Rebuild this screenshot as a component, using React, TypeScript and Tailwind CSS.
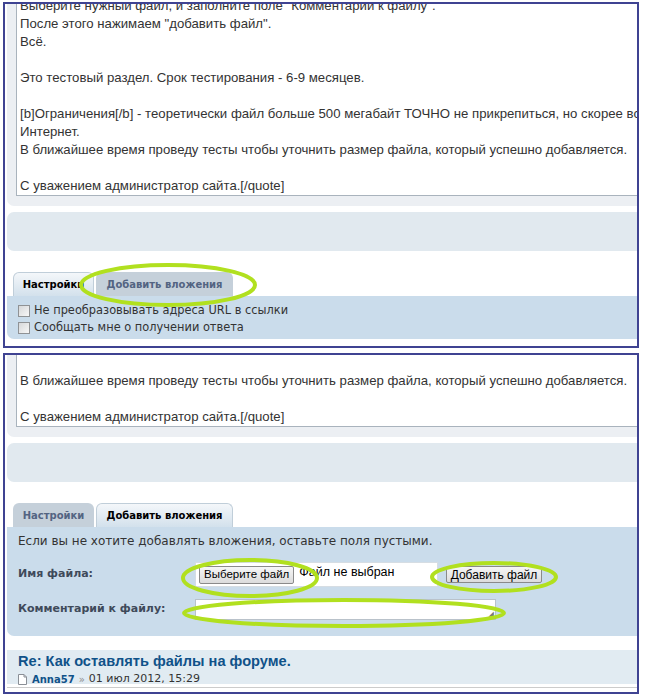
import React from "react";

const lines1 = [
  'Выберите нужный файл, и заполните поле "Комментарии к файлу".',
  'После этого нажимаем "добавить файл".',
  "Всё.",
  "",
  "Это тестовый раздел. Срок тестирования - 6-9 месяцев.",
  "",
  "[b]Ограничения[/b] - теоретически файл больше 500 мегабайт ТОЧНО не прикрепиться, но скорее всего не загрузится",
  "Интернет.",
  "В ближайшее время проведу тесты чтобы уточнить размер файла, который успешно добавляется.",
  "",
  "С уважением администратор сайта.[/quote]",
];

const lines2 = [
  "В ближайшее время проведу тесты чтобы уточнить размер файла, который успешно добавляется.",
  "",
  "С уважением администратор сайта.[/quote]",
];

const taFont = { fontFamily: '"Liberation Sans", Arial, sans-serif' };

function TextBlock({ lines, top }: { lines: string[]; top: "p1" | "p2" }) {
  return (
    <div className="w-[720px] ml-[2px] bg-[#eceff3] rounded-bl-[7px] pl-[9px] pb-[10px]">
      <div
        className={
          "bg-white border-l border-b border-[#a9b3bd] pl-[3px] text-[13.2px] leading-[18px] text-[#333] whitespace-nowrap " +
          (top === "p1" ? "-mt-[7px]" : "pt-[17px]")
        }
        style={taFont}
      >
        {lines.map((l, i) => (
          <div key={i} className="h-[18px]">
            {l}
          </div>
        ))}
      </div>
    </div>
  );
}

function Bar() {
  return <div className="w-[720px] ml-[2px] mt-[6px] h-[39px] bg-[#e1e9ef] rounded-[7px]" />;
}

function Tabs({ active }: { active: 0 | 1 }) {
  const on =
    "bg-gradient-to-b from-[#f4f7fa] to-[#d3e1ec] text-[#000] border border-b-0 border-[#c0ced9]";
  const off = "bg-[#c5d0da] text-[#536482]";
  const base =
    "h-[24px] rounded-t-[6px] flex items-center justify-center text-[10px] font-bold";
  return (
    <div
      className="flex items-end gap-[2px] ml-[8px] mt-[21px]"
      style={{ fontFamily: '"DejaVu Sans", Verdana, sans-serif' }}
    >
      <div className={base + " w-[81px] " + (active === 0 ? on : off)}>Настройки</div>
      <div className={base + " w-[137px] " + (active === 1 ? on : off)}>Добавить вложения</div>
    </div>
  );
}

function Cb() {
  return (
    <span className="inline-block w-[12px] h-[12px] border border-[#8f9295] bg-gradient-to-br from-[#d6d8da] to-[#f7f7f7] mr-[4px] shrink-0" />
  );
}

function Panel({ children, className }: { children: React.ReactNode; className?: string }) {
  return (
    <div className={"w-[636px] border-2 border-[#3f4392] overflow-hidden bg-white " + (className || "")}>
      {children}
    </div>
  );
}

export default function App() {
  const verdana = { fontFamily: '"DejaVu Sans", Verdana, sans-serif' };
  const arial = { fontFamily: '"Liberation Sans", Arial, sans-serif' };
  return (
    <div className="relative w-[646px] h-[699px] bg-white overflow-hidden">
      <div className="pt-[2px] pl-[3px]">
        <Panel className="h-[346px]">
          <TextBlock lines={lines1} top="p1" />
          <Bar />
          <Tabs active={0} />
          <div
            className="w-[720px] ml-[2px] h-[43px] bg-[#cadceb] rounded-bl-[7px] pl-[11px] pt-[7px] text-[11.4px] text-[#333]"
            style={verdana}
          >
            <div className="flex items-center h-[16px]">
              <Cb />
              <span>Не преобразовывать адреса URL в ссылки</span>
            </div>
            <div className="flex items-center h-[17px]">
              <Cb />
              <span>Сообщать мне о получении ответа</span>
            </div>
          </div>
        </Panel>

        <Panel className="h-[341px] mt-[5px]">
          <TextBlock lines={lines2} top="p2" />
          <Bar />
          <Tabs active={1} />
          <div
            className="w-[720px] ml-[2px] h-[109px] bg-[#cadceb] rounded-bl-[7px] pl-[11px] pt-[5px] text-[#333]"
            style={verdana}
          >
            <div className="text-[12px] h-[18px] leading-[18px]">
              Если вы не хотите добавлять вложения, оставьте поля пустыми.
            </div>
            <div className="flex items-center mt-[12px] h-[25px]">
              <div className="w-[177px] text-[11px] font-bold text-[#3f4a5a]">Имя файла:</div>
              <div className="w-[243px] h-[25px] bg-white border border-[#d6dde3] flex items-center pl-[3px]">
                <span
                  className="h-[18px] px-[4px] flex items-center text-[11.5px] text-black bg-gradient-to-b from-[#f6f6f6] to-[#dcdcdc] border border-[#8a8a8a] rounded-[2px]"
                  style={arial}
                >
                  Выберите файл
                </span>
                <span className="ml-[5px] text-[12.5px] text-black -mt-[4px]" style={arial}>
                  Файл не выбран
                </span>
              </div>
              <span
                className="ml-[8px] h-[17px] w-[96px] flex items-center justify-center text-[12px] text-black bg-gradient-to-b from-[#f6f6f6] to-[#dcdcdc] border border-[#8a8a8a] rounded-[2px]"
                style={arial}
              >
                Добавить файл
              </span>
            </div>
            <div className="flex items-center mt-[11px] h-[22px]">
              <div className="w-[177px] text-[11px] font-bold text-[#3f4a5a]">Комментарий к файлу:</div>
              <div className="relative w-[301px] h-[21px] bg-white border border-[#b9c2ca]">
                <span className="absolute right-[1px] bottom-[1px] text-[7px] leading-none text-[#777]">◢</span>
              </div>
            </div>
          </div>

          <div className="w-[720px] ml-[2px] mt-[14px] h-[34px] bg-[#e1ebf2] pl-[11px] pt-[3px]">
            <div className="text-[14.6px] font-bold leading-[16px] text-[#105289]" style={arial}>
              Re: Как оставлять файлы на форуме.
            </div>
            <div className="flex items-center mt-[2px] text-[10px] text-[#333]" style={verdana}>
              <svg width="9" height="11" viewBox="0 0 9 11" className="mr-[5px]">
                <path d="M0.5 0.5 H6 L8.5 3 V10.5 H0.5 Z" fill="#fff" stroke="#8a8f96" />
                <path d="M6 0.5 V3 H8.5" fill="none" stroke="#8a8f96" />
              </svg>
              <span className="font-bold text-[#105289]">Anna57</span>
              <span className="mx-[4px] text-[#8f8f8f]">»</span>
              <span className="text-[11px]">01 июл 2012, 15:29</span>
            </div>
          </div>
          <div className="w-[720px] ml-[2px] mt-[3px] h-px bg-[#cccccc]" />
        </Panel>
      </div>

      <svg className="absolute inset-0 pointer-events-none" width="646" height="699">
        <g fill="none" stroke="#b1e01f" strokeWidth="4">
          <ellipse cx="168" cy="285" rx="87" ry="20" />
          <ellipse cx="250" cy="578" rx="67" ry="18" />
          <ellipse cx="494" cy="577" rx="62" ry="14" />
          <ellipse cx="344" cy="613" rx="160" ry="13" />
        </g>
      </svg>
    </div>
  );
}
